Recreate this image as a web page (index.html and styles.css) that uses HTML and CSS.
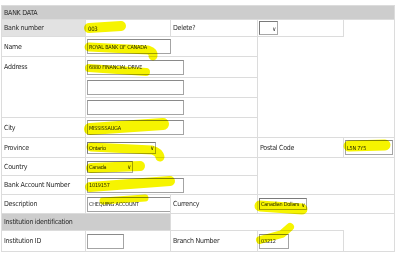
FILE: index.html
```html
<!DOCTYPE html>
<html lang="en">
<head>
    <meta charset="UTF-8">
    <meta name="viewport" content="width=device-width, initial-scale=1.0">
    <title>Bank Data</title>
    <link rel="stylesheet" href="styles.css">
</head>
<body>
    <div class="page">
        <table class="bank">
            <colgroup>
                <col class="c1"><col class="c2"><col class="c3"><col class="c4"><col class="c5">
            </colgroup>
            <tr class="h14">
                <td colspan="5" class="section">BANK DATA</td>
            </tr>
            <tr class="h17">
                <td class="label shade">Bank number</td>
                <td class="value text">003</td>
                <td class="label">Delete?</td>
                <td class="value"><span class="select s-delete"><span class="opt"></span><span class="arrow">&#8744;</span></span></td>
                <td class="blank"></td>
            </tr>
            <tr class="h20">
                <td class="label">Name</td>
                <td colspan="2" class="value"><input class="w84" value="ROYAL BANK OF CANADA"></td>
                <td colspan="2" rowspan="5" class="blank"></td>
            </tr>
            <tr class="h21">
                <td class="label top" rowspan="3">Address</td>
                <td colspan="2" class="value"><input class="w97" value="6880 FINANCIAL DRIVE"></td>
            </tr>
            <tr class="h20">
                <td colspan="2" class="value"><input class="w97"></td>
            </tr>
            <tr class="h20">
                <td colspan="2" class="value"><input class="w97"></td>
            </tr>
            <tr class="h20">
                <td class="label">City</td>
                <td colspan="2" class="value"><input class="w97" value="MISSISSAUGA"></td>
            </tr>
            <tr class="h20">
                <td class="label">Province</td>
                <td colspan="2" class="value"><span class="select w69"><span class="opt">Ontario</span><span class="arrow">&#8744;</span></span></td>
                <td class="label">Postal Code</td>
                <td class="value"><input class="w48" value="L5N 7Y5"></td>
            </tr>
            <tr class="h18">
                <td class="label">Country</td>
                <td colspan="2" class="value"><span class="select w46"><span class="opt">Canada</span><span class="arrow">&#8744;</span></span></td>
                <td colspan="2" rowspan="2" class="blank"></td>
            </tr>
            <tr class="h19">
                <td class="label">Bank Account Number</td>
                <td colspan="2" class="value"><input class="w97" value="1019157"></td>
            </tr>
            <tr class="h19">
                <td class="label">Description</td>
                <td class="value"><input class="w84" value="CHEQUING ACCOUNT"></td>
                <td class="label">Currency</td>
                <td colspan="2" class="value"><span class="select w48"><span class="opt">Canadian Dollars</span><span class="arrow">&#8744;</span></span></td>
            </tr>
            <tr class="h17">
                <td colspan="2" class="section">Institution identification</td>
                <td colspan="3" class="blank"></td>
            </tr>
            <tr class="h21">
                <td class="label">Institution ID</td>
                <td class="value"><input class="w37"></td>
                <td class="label">Branch Number</td>
                <td class="value"><input class="w30" value="03212"></td>
                <td class="blank"></td>
            </tr>
        </table>

        <!-- highlighter marks drawn over the form -->
        <svg class="marks" width="400" height="253" viewBox="0 0 400 253">
            <g fill="none" stroke="#f6f400" stroke-linecap="round" stroke-linejoin="round">
                <path d="M89 28 L121 26" stroke-width="10"/>
                <path d="M89 47 L148 50 Q154 52 153 56" stroke-width="9"/>
                <path d="M89 68 L146 72" stroke-width="8"/>
                <path d="M90 129 L163 124" stroke-width="12"/>
                <path d="M91 147 L152 150 Q159 152 160 157" stroke-width="9"/>
                <path d="M91 168 L140 166" stroke-width="10"/>
                <path d="M90 187 L170 181" stroke-width="10"/>
                <path d="M103 201 L145 198" stroke-width="7"/>
                <path d="M349 146 L385 145" stroke-width="11"/>
                <path d="M260 206 L302 209" stroke-width="11"/>
                <path d="M260 240 L282 234 L290 227" stroke-width="8"/>
            </g>
        </svg>
    </div>
</body>
</html>
```

FILE: styles.css
```css
body {
    margin: 0;
    padding: 0;
    background-color: #fff;
    color: #2a2a2a;
    font-family: "DejaVu Sans Condensed", "DejaVu Sans", sans-serif;
}
.page {
    position: relative;
    width: 400px;
    height: 253px;
    overflow: hidden;
    padding: 5px 0 0 1px;
    box-sizing: border-box;
}
.bank {
    width: 393px;
    table-layout: fixed;
    border-collapse: collapse;
    border: 1px solid #dcdcdc;
    font-size: 7px;
    letter-spacing: -0.25px;
}
.c1 { width: 84px; }
.c2 { width: 85px; }
.c3 { width: 87px; }
.c4 { width: 86px; }
.c5 { width: 51px; }
.h14 { height: 14px; }
.h17 { height: 17px; }
.h18 { height: 18px; }
.h19 { height: 19px; }
.h20 { height: 20px; }
.h21 { height: 21px; }
td {
    border: 1px solid #dcdcdc;
    padding: 0;
    vertical-align: middle;
    white-space: nowrap;
    overflow: hidden;
}
.section {
    background-color: #cdcdcd;
    padding-left: 2px;
}
.label {
    padding-left: 2px;
}
.label.top {
    vertical-align: top;
    padding-top: 6px;
}
.shade {
    background-color: #e2e2e2;
}
.value {
    padding-left: 1px;
}
.text {
    padding-left: 2px;
    font-size: 6px;
}
.blank {
    border: none;
}
input {
    display: block;
    box-sizing: border-box;
    height: 15px;
    margin: 0;
    padding: 0 1px;
    border: 1px solid #a4a4a4;
    border-top-color: #8a8a8a;
    font-family: "DejaVu Sans Condensed", "DejaVu Sans", sans-serif;
    font-size: 5.5px;
    letter-spacing: -0.2px;
    color: #2a2a2a;
    background: #fff;
}
.w84 { width: 84px; }
.w97 { width: 97px; }
.w48 { width: 48px; }
.w37 { width: 37px; }
.w30 { width: 30px; }
.select {
    display: flex;
    align-items: center;
    box-sizing: border-box;
    height: 12px;
    border: 1px solid #a8a8a8;
    border-top-color: #7a7a7a;
    border-left-color: #7a7a7a;
    font-size: 5.5px;
    color: #2a2a2a;
    background: #fff;
    padding-left: 1px;
}
.select .opt {
    flex: 1;
    overflow: hidden;
}
.select .arrow {
    font-size: 6px;
    color: #222;
    padding-right: 1px;
}
.s-delete {
    width: 19px;
    height: 14px;
}
.w69 { width: 69px; }
.w46 { width: 46px; }
.select.w48 { width: 48px; }
.marks {
    position: absolute;
    left: 0;
    top: 0;
    mix-blend-mode: multiply;
    pointer-events: none;
}
```
